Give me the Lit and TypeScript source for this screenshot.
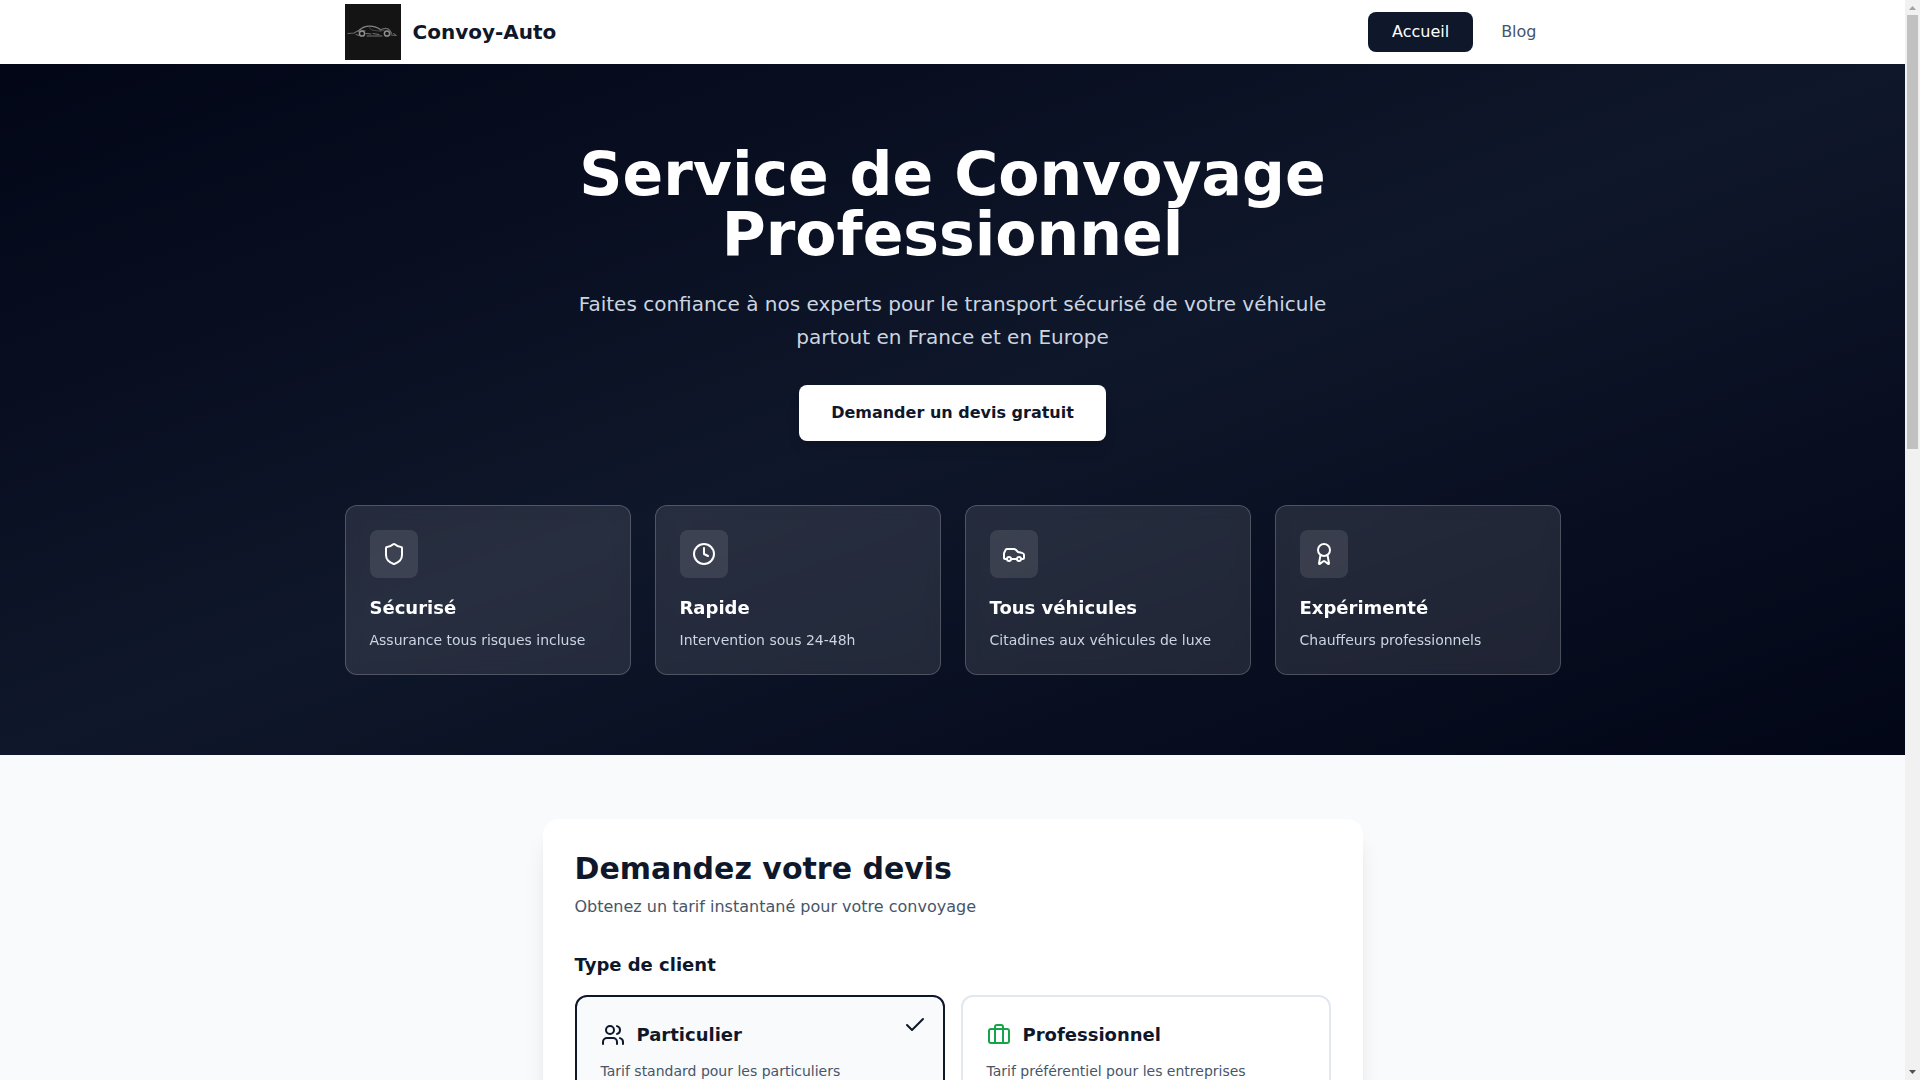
import { LitElement, html, css, svg } from "lit";
import { customElement, state } from "lit/decorators.js";

const icons = {
  shield: svg`<path d="M20 13c0 5-3.5 7.5-7.66 8.95a1 1 0 0 1-.67-.01C7.5 20.5 4 18 4 13V6a1 1 0 0 1 1-1c2 0 4.5-1.2 6.24-2.72a1.17 1.17 0 0 1 1.52 0C14.51 3.81 17 5 19 5a1 1 0 0 1 1 1z"/>`,
  clock: svg`<circle cx="12" cy="12" r="10"/><polyline points="12 6 12 12 16 14"/>`,
  car: svg`<path d="M19 17h2c.6 0 1-.4 1-1v-3c0-.9-.7-1.7-1.5-1.9C18.7 10.6 16 10 16 10s-1.3-1.4-2.2-2.3c-.5-.4-1.1-.7-1.8-.7H5c-.6 0-1.1.4-1.4.9l-1.4 2.9A3.7 3.7 0 0 0 2 12v4c0 .6.4 1 1 1h2"/><circle cx="7" cy="17" r="2"/><path d="M9 17h6"/><circle cx="17" cy="17" r="2"/>`,
  award: svg`<path d="m15.477 12.89 1.515 8.526a.5.5 0 0 1-.81.47l-3.58-2.687a1 1 0 0 0-1.197 0l-3.586 2.686a.5.5 0 0 1-.81-.469l1.514-8.526"/><circle cx="12" cy="8" r="6"/>`,
  users: svg`<path d="M16 21v-2a4 4 0 0 0-4-4H6a4 4 0 0 0-4 4v2"/><circle cx="9" cy="7" r="4"/><path d="M22 21v-2a4 4 0 0 0-3-3.87"/><path d="M16 3.13a4 4 0 0 1 0 7.75"/>`,
  briefcase: svg`<path d="M16 20V4a2 2 0 0 0-2-2h-4a2 2 0 0 0-2 2v16"/><rect width="20" height="14" x="2" y="6" rx="2"/>`,
  check: svg`<path d="M20 6 9 17l-5-5"/>`,
};

type IconName = keyof typeof icons;

const icon = (name: IconName, cls = "") => html`
  <svg class="icon ${cls}" viewBox="0 0 24 24" aria-hidden="true">${icons[name]}</svg>
`;

const features: { icon: IconName; title: string; text: string }[] = [
  { icon: "shield", title: "Sécurisé", text: "Assurance tous risques incluse" },
  { icon: "clock", title: "Rapide", text: "Intervention sous 24-48h" },
  { icon: "car", title: "Tous véhicules", text: "Citadines aux véhicules de luxe" },
  { icon: "award", title: "Expérimenté", text: "Chauffeurs professionnels" },
];

const clients: { id: string; icon: IconName; title: string; text: string }[] = [
  { id: "particulier", icon: "users", title: "Particulier", text: "Tarif standard pour les particuliers" },
  { id: "professionnel", icon: "briefcase", title: "Professionnel", text: "Tarif préférentiel pour les entreprises" },
];

@customElement("app-root")
export class AppRoot extends LitElement {
  @state() private client = "particulier";

  static styles = css`
    :host {
      display: grid;
      grid-template-columns: minmax(0, 1fr) 15px;
      height: 100vh;
      overflow: hidden;
      font-family: "DejaVu Sans", sans-serif;
      font-size: 16px;
      line-height: 24px;
      color: #0f172a;
    }
    * {
      box-sizing: border-box;
    }
    h1, h2, h3, p, fieldset, legend {
      margin: 0;
      padding: 0;
      border: 0;
    }
    a {
      color: inherit;
      text-decoration: none;
    }
    .page {
      overflow: hidden;
      background: #f8fafc;
    }
    .container {
      max-width: 1280px;
      margin: 0 auto;
      padding: 0 32px;
    }
    .header {
      background: #fff;
    }
    .bar {
      display: flex;
      align-items: center;
      justify-content: space-between;
      height: 64px;
    }
    .brand {
      display: flex;
      align-items: center;
      gap: 12px;
      font-size: 20px;
      line-height: 28px;
      font-weight: 700;
    }
    .logo {
      display: block;
      width: 56px;
      height: 56px;
    }
    .nav {
      display: flex;
      gap: 4px;
    }
    .nav-link {
      padding: 8px 24px;
      border-radius: 8px;
      color: #475569;
    }
    .nav-link.active {
      background: #0f172a;
      color: #fff;
    }
    .hero {
      padding: 80px 0;
      background: linear-gradient(to bottom right, #020617, #0f172a, #020617);
      color: #fff;
    }
    .intro {
      display: flex;
      flex-direction: column;
      align-items: center;
      max-width: 768px;
      margin: 0 auto 64px;
      text-align: center;
    }
    .intro h1 {
      margin-bottom: 24px;
      font-size: 60px;
      line-height: 60px;
      font-weight: 700;
    }
    .lead {
      margin-bottom: 31px;
      font-size: 20px;
      line-height: 33px;
      color: #cbd5e1;
    }
    .cta {
      padding: 16px 32px;
      border: 0;
      border-radius: 8px;
      background: #fff;
      color: #0f172a;
      font: inherit;
      font-weight: 600;
      box-shadow: 0 10px 15px -3px rgb(0 0 0 / 0.1), 0 4px 6px -4px rgb(0 0 0 / 0.1);
      cursor: pointer;
    }
    .features {
      display: grid;
      grid-template-columns: repeat(4, minmax(0, 1fr));
      gap: 24px;
    }
    .feature {
      padding: 24px;
      border: 1px solid rgb(255 255 255 / 0.2);
      border-radius: 12px;
      background: rgb(255 255 255 / 0.1);
      backdrop-filter: blur(8px);
    }
    .feature-icon {
      display: grid;
      place-items: center;
      width: 48px;
      height: 48px;
      margin-bottom: 16px;
      border-radius: 8px;
      background: rgb(255 255 255 / 0.1);
    }
    .feature h3 {
      margin-bottom: 8px;
      font-size: 18px;
      line-height: 28px;
      font-weight: 600;
    }
    .feature p {
      font-size: 14px;
      line-height: 20px;
      color: #cbd5e1;
    }
    .icon {
      display: block;
      flex: none;
      width: 24px;
      height: 24px;
      fill: none;
      stroke: currentColor;
      stroke-width: 2;
      stroke-linecap: round;
      stroke-linejoin: round;
    }
    .quote {
      padding: 64px 32px;
    }
    .panel {
      max-width: 820px;
      margin: 0 auto;
      padding: 32px;
      border-radius: 16px;
      background: #fff;
      box-shadow: 0 20px 25px -5px rgb(0 0 0 / 0.1), 0 8px 10px -6px rgb(0 0 0 / 0.1);
    }
    .panel h2 {
      margin-bottom: 8px;
      font-size: 30px;
      line-height: 36px;
      font-weight: 700;
    }
    .subtitle {
      margin-bottom: 32px;
      color: #475569;
    }
    legend {
      margin-bottom: 16px;
      font-size: 18px;
      line-height: 28px;
      font-weight: 600;
    }
    .clients {
      display: grid;
      grid-template-columns: repeat(2, minmax(0, 1fr));
      gap: 16px;
    }
    .client {
      position: relative;
      padding: 24px;
      border: 2px solid #e2e8f0;
      border-radius: 12px;
      cursor: pointer;
    }
    .client.selected {
      border-color: #0f172a;
      background: #f8fafc;
    }
    .client input {
      position: absolute;
      inset: 0;
      margin: 0;
      opacity: 0;
      cursor: pointer;
    }
    .client-head {
      display: flex;
      align-items: center;
      gap: 12px;
      margin-bottom: 12px;
      font-size: 18px;
      line-height: 28px;
      font-weight: 600;
    }
    .client-text {
      display: block;
      font-size: 14px;
      line-height: 20px;
      color: #475569;
    }
    .briefcase {
      color: #16a34a;
    }
    .tick {
      position: absolute;
      top: 16px;
      right: 16px;
    }
    .scrollbar {
      display: flex;
      flex-direction: column;
      align-items: center;
      background: #f1f1f1;
    }
    .arrow {
      flex: none;
      width: 15px;
      height: 15px;
      fill: #a3a3a3;
    }
    .arrow.down {
      fill: #505050;
    }
    .track {
      flex: 1;
      width: 11px;
    }
    .thumb {
      height: 41.3%;
      background: #c1c1c1;
    }
  `;

  private logo() {
    return html`
      <svg class="logo" viewBox="0 0 56 56" aria-hidden="true">
        <rect width="56" height="56" fill="#141414" />
        <g fill="none" stroke-linecap="round" stroke-linejoin="round">
          <path d="M13 27C15.500 25.500 17 23 21.500 22.400C28 21.600 32 23 36 26" stroke="#858585" stroke-width="1.300" />
          <path d="M35 26C39 23.800 43 24 45 26.500L46.500 29.500" stroke="#6a6a6a" stroke-width="1.200" />
          <path d="M46 31L51.500 31.500L48.500 29.500" stroke="#6a6a6a" stroke-width="1" />
          <path d="M3 29.500L9.500 29M9 29L12 27.200L20 26.800" stroke="#6a6a6a" stroke-width="1.100" />
          <path d="M11 30.500L14 31.500M21 29.500L26 30M22 32H37M28 29.500L34 30.500" stroke="#747474" stroke-width="1" />
          <path d="M24 23L26.500 26L35 27.200L39 26.500" stroke="#484848" stroke-width="1" />
          <circle cx="17" cy="29.500" r="2.600" stroke="#909090" stroke-width="1.500" />
          <circle cx="42" cy="29.500" r="2.600" stroke="#909090" stroke-width="1.500" />
        </g>
      </svg>
    `;
  }

  render() {
    return html`
      <div class="page">
        <header class="header">
          <div class="container bar">
            <a class="brand" href="#accueil">${this.logo()}<span>Convoy-Auto</span></a>
            <nav class="nav">
              <a class="nav-link active" href="#accueil" aria-current="page">Accueil</a>
              <a class="nav-link" href="#blog">Blog</a>
            </nav>
          </div>
        </header>
        <main>
          <section class="hero">
            <div class="container">
              <div class="intro">
                <h1>Service de Convoyage Professionnel</h1>
                <p class="lead">
                  Faites confiance à nos experts pour le transport sécurisé de votre véhicule partout en France et en
                  Europe
                </p>
                <button class="cta" type="button">Demander un devis gratuit</button>
              </div>
              <div class="features">
                ${features.map(
                  (f) => html`
                    <article class="feature">
                      <div class="feature-icon">${icon(f.icon)}</div>
                      <h3>${f.title}</h3>
                      <p>${f.text}</p>
                    </article>
                  `,
                )}
              </div>
            </div>
          </section>
          <section class="quote">
            <form class="panel">
              <h2>Demandez votre devis</h2>
              <p class="subtitle">Obtenez un tarif instantané pour votre convoyage</p>
              <fieldset>
                <legend>Type de client</legend>
                <div class="clients">
                  ${clients.map(
                    (c) => html`
                      <label class="client ${this.client === c.id ? "selected" : ""}" for=${c.id}>
                        <input
                          type="radio"
                          name="client"
                          id=${c.id}
                          .checked=${this.client === c.id}
                          @change=${() => (this.client = c.id)}
                        />
                        <span class="client-head">${icon(c.icon, c.icon)}<span>${c.title}</span></span>
                        <span class="client-text">${c.text}</span>
                        ${this.client === c.id ? icon("check", "tick") : ""}
                      </label>
                    `,
                  )}
                </div>
              </fieldset>
            </form>
          </section>
        </main>
      </div>
      <div class="scrollbar" aria-hidden="true">
        <svg class="arrow" viewBox="0 0 15 15"><path d="M4 10L7.500 6L11 10z" /></svg>
        <div class="track"><div class="thumb"></div></div>
        <svg class="arrow down" viewBox="0 0 15 15"><path d="M4 5L7.500 9L11 5z" /></svg>
      </div>
    `;
  }
}
